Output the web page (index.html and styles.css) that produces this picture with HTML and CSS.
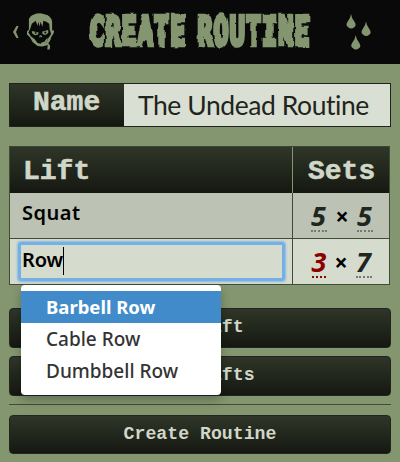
FILE: index.html
```html
<!DOCTYPE html>
<html lang="en">
<head>
<meta charset="utf-8">
<title>Create Routine</title>
<link rel="stylesheet" href="styles.css">
</head>
<body>
<header class="topbar">
  <a class="home">
    <svg class="chevron" viewBox="0 0 7 16"><path d="M6.500 1H4L0 8l4 7h2.500L3.500 8z"/></svg>
    <svg class="zombie" viewBox="0 0 30 38">
      <path fill-rule="evenodd" d="M3 6Q5 2 11 .5L15 0l7 2q5 3 5 7v9q3-1 1.500 3L26 25q-1 5-3 6l2 3-.5 3.500H22l.5-4.500-5.500 1.500-5-.5-5-4-3-5-3-3v-3l2-2V9zM6 11 4.500 16 2.500 20 5 24l4 3 3 4 4 1 5-1 2-5 3-4.500L24.500 17l-.5-6-3-2-3-1-1 6-2-5-1 5-1-5-1 4-2-5z"/>
      <path d="m6 18.500 7 1.500-.5 2-3 1-3-2zM17 19l6-1.500v3l-3 2-3-1zM13.500 25l1-2.500.5 1 .5-1 1.500 2.500h-1.500l-.5-1-.5 1z"/>
      <circle class="pupil" cx="10" cy="20.500" r=".9"/><circle class="pupil" cx="20" cy="20" r="1.100"/>
      <path d="m15 31 4-1.500 3-4 .5 2-2 4-4 1z"/>
    </svg>
  </a>
  <h1 class="title"><span>CREATE ROUTINE</span></h1>
  <svg class="drops" viewBox="0 0 26 38">
    <path id="drop" d="M5 1Q5.500 5 8 8q3 4 .5 6Q5 17 2 14q-3-2 0-6 2.500-3 3-7z"/>
    <use href="#drop" x="15" y="7.500"/><use href="#drop" x="4.700" y="21"/>
  </svg>
</header>
<main>
  <div class="name-row"><label>Name</label><div class="name-value">The Undead Routine</div></div>
  <div class="table">
    <div class="row head"><div class="cell">Lift</div><div class="cell sets">Sets</div></div>
    <div class="row odd"><div class="cell hand">Squat</div><div class="cell count"><b>5</b><i>×</i><b>5</b></div></div>
    <div class="row"><div class="cell edit"><div class="input hand">Row<span class="caret"></span></div>
      <ul class="menu hand"><li class="active">Barbell Row</li><li>Cable Row</li><li>Dumbbell Row</li></ul>
    </div><div class="cell count"><b class="red">3</b><i>×</i><b>7</b></div></div>
  </div>
  <div class="button">Add Lift</div>
  <div class="button">Sort Lifts</div>
  <hr>
  <div class="button create">Create Routine</div>
</main>
<svg class="filters"><filter id="rough" x="-5%" y="-10%" width="110%" height="120%"><feTurbulence type="fractalNoise" baseFrequency=".12" numOctaves="1" seed="4"/><feDisplacementMap in="SourceGraphic" scale="4" xChannelSelector="R" yChannelSelector="G"/></filter></svg>
</body>
</html>
```
FILE: styles.css
```css
* { box-sizing: border-box; }
body { margin: 0; width: 400px; height: 462px; overflow: hidden; background: #83966f; color: #1f241c; font-family: "Noto Sans", sans-serif; }
.topbar { height: 64px; background: #090909; display: grid; grid-template-columns: 72px 256px 1fr; align-items: start; fill: #83966f; }
.home { display: flex; padding: 13px 0 0 13px; }
.chevron { width: 6px; height: 14px; margin: 12px 7px 0 0; }
.zombie { width: 29px; height: 37px; }
.pupil { fill: #090909; }
.title { margin: 0; height: 64px; text-align: center; color: #83966f; filter: url(#rough); }
.title span { display: inline-block; margin: 0 -80px; white-space: nowrap; font: bold 39px/64px "DejaVu Sans Mono", monospace; letter-spacing: 1.800px; word-spacing: -8px; transform: scaleX(.64); -webkit-text-stroke: 4.500px #83966f; }
.drops { width: 26px; height: 38px; margin: 13px 0 0 18px; }
main { padding: 19px 9px 0; }
.name-row { display: grid; grid-template-columns: 114px 1fr; height: 44px; border: 1px solid #1f241c; background: #d9dfd2; }
.name-row label { background: linear-gradient(#2f3628, #151811); color: #d0d7c8; font: bold 28px/37px "Liberation Mono", monospace; padding-left: 23px; -webkit-text-stroke: .6px; }
.name-value { padding-left: 14px; font: 26.500px/42px Lato, sans-serif; letter-spacing: -.43px; white-space: nowrap; }
.table { width: 381px; margin: 19px 0 23px; border: 1px solid #414b36; border-top-color: #3c4732; }
.row { display: grid; grid-template-columns: 282px 1fr; height: 46px; background: #d5dbcd; border-top: 1px solid #414b36; }
.row.odd { background: #bcc2b4; height: 45px; border-top: 0; }
.cell + .cell { border-left: 1px solid #414b36; }
.head { height: 46px; border: 0; background: linear-gradient(#2f3628, #151811); color: #d0d7c8; font: bold 28px/49px "Liberation Mono", monospace; -webkit-text-stroke: .6px; }
.head .cell { height: 46px; padding-left: 13px; }
.head .cell + .cell { border-color: #83966f; padding-left: 15px; }
.hand { font-family: "Noto Sans", sans-serif; font-weight: 600; font-size: 20px; color: #000; }
.odd .hand { padding-left: 12px; line-height: 40px; letter-spacing: .5px; }
.count { display: flex; justify-content: center; align-items: flex-start; padding: 11px 0 0 1px; gap: 9px; }
.count b { width: 16px; height: 28px; font: italic bold 27px/24px "Noto Sans", sans-serif; color: #20261e; border-bottom: 2px dotted #747b6c; text-align: center; }
.count .red { color: #8b0000; border-color: #8b0000; width: 14px; }
.count i { font: bold 23px/24px "Noto Sans", sans-serif; color: #000; width: 12px; text-align: center; }
.edit { position: relative; }
.input { margin: 3px 7px 0 8px; height: 39px; padding: 0 0 0 1px; line-height: 29px; border: 3px solid #74b0e6; border-radius: 3px; box-shadow: 0 0 2px 1px #8abbe0; display: flex; letter-spacing: -.2px; }
.caret { width: 1px; height: 28px; background: #000; margin-top: 2px; }
.menu { position: absolute; z-index: 2; left: 11px; top: 46px; width: 200px; height: 110px; margin: 0; padding: 6px 0; list-style: none; background: #fff; border-radius: 4px; box-shadow: 0 5px 10px rgba(0,0,0,.25); color: #333; font-size: 19px; font-weight: 500; }
.menu li { height: 32px; padding-left: 25px; line-height: 32px; white-space: nowrap; }
.menu .active { background: #428bca; color: #fff; font-weight: bold; font-size: 18.500px; line-height: 31px; }
.button { height: 40px; margin-bottom: 8px; border: 1px solid #20261d; border-radius: 4px; background: linear-gradient(#2f3628, #151811); color: #d0d7c8; text-align: center; font: bold 18.200px/37px "Liberation Mono", monospace; }
hr { height: 1px; margin: 0 0 10px; border: 0; background: #414b36; }
.create { height: 39px; }
.filters { position: absolute; width: 0; height: 0; }
```
